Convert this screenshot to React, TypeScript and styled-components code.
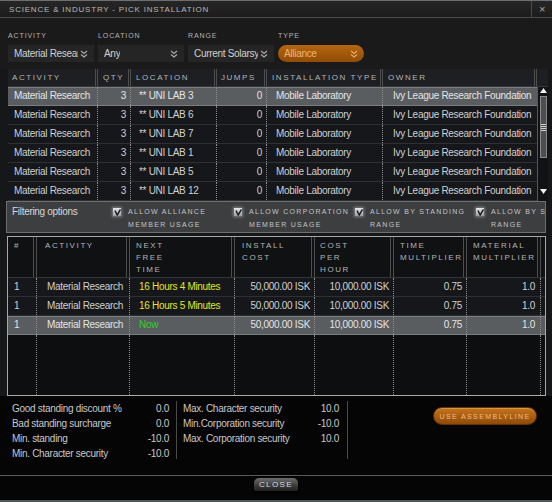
import React from "react"
import styled, { createGlobalStyle } from "styled-components"

const GlobalStyle = createGlobalStyle`
	html, body {
		margin: 0;
		padding: 0;
		background: #000;
	}
	body {
		font-family: "Liberation Sans", Arial, sans-serif;
	}
`

const Window = styled.div`
	width: 552px;
	height: 502px;
	box-sizing: border-box;
	border-top: 1px solid #6e6e6e;
	border-bottom: 2px solid #4a5858;
	background: #161718;
	color: #d0d0d0;
	font-size: 10px;
	letter-spacing: -0.3px;
	display: flex;
	flex-direction: column;
	overflow: hidden;
`

const TitleBar = styled.div`
	height: 16px;
	border-bottom: 1px solid #4a4a4a;
	background: linear-gradient(#262626, #1c1c1c);
	display: flex;
	align-items: center;
	justify-content: space-between;
	padding-left: 9px;
`

const Caps = styled.span<{ $size?: number; $ls?: number; $color?: string }>`
	font-size: ${(p) => p.$size ?? 8}px;
	letter-spacing: ${(p) => p.$ls ?? 1.5}px;
	color: ${(p) => p.$color ?? "#b4b4b4"};
	text-transform: uppercase;
	white-space: nowrap;
`

const CloseX = styled.div`
	width: 20px;
	height: 16px;
	border-left: 1px solid #4a4a4a;
	display: flex;
	align-items: center;
	justify-content: center;
	color: #a8a8a8;
	font-size: 11px;
`

const FilterBar = styled.div`
	display: grid;
	grid-template-columns: repeat(4, 86px);
	column-gap: 4px;
	padding: 13px 0 7px 8px;
	background: #1a1a1b;
`

const FilterField = styled.div`
	display: flex;
	flex-direction: column;
	gap: 4px;
	line-height: 10px;
`

const Select = styled.div<{ $accent?: boolean }>`
	height: 17px;
	box-sizing: border-box;
	display: flex;
	align-items: center;
	justify-content: space-between;
	gap: 2px;
	padding: 0 6px 0 6px;
	white-space: nowrap;
	overflow: hidden;
	font-size: 10px;
	color: ${(p) => (p.$accent ? "#f2b46a" : "#d0d0d0")};
	background: ${(p) =>
		p.$accent ? "linear-gradient(#b56610, #8f4c08)" : "#252526"};
	border-radius: ${(p) => (p.$accent ? "9px" : "0")};
	span {
		overflow: hidden;
	}
`

const Chevrons = ({ color }: { color: string }) => (
	<svg width='8' height='8' viewBox='0 0 8 8' style={{ flexShrink: 0 }}>
		<path d='M1 1 L4 3.5 L7 1 M1 4.5 L4 7 L7 4.5' stroke={color} strokeWidth='1.2' fill='none' />
	</svg>
)

const Table = styled.div`
	margin: 0 4px 0 8px;
	display: flex;
	flex-direction: column;
`

const HeadRow = styled.div<{ $cols: string; $h: number }>`
	display: grid;
	grid-template-columns: ${(p) => p.$cols};
	height: ${(p) => p.$h}px;
	border-bottom: 1px solid #333538;
	background: ${(p) => (p.$h > 20 ? "#0f1113" : "#1d1f22")};
`

const HeadCell = styled.div<{ $right?: boolean; $pad?: number; $double?: number }>`
	border-right: ${(p) => p.$double ?? 3}px double #4e4e4e;
	padding: ${(p) => (p.$right ? `0 8px 0 0` : `0 0 0 ${p.$pad ?? 5}px`)};
	text-align: ${(p) => (p.$right ? "right" : "left")};
	font-size: 8px;
	letter-spacing: 1.6px;
	color: #b4b4b4;
	text-transform: uppercase;
	white-space: nowrap;
	overflow: hidden;
	line-height: 17px;
	&:last-child {
		border-right: none;
	}
`

const TallHeadCell = styled(HeadCell)`
	line-height: 12px;
	padding-top: 3px;
`

const Body = styled.div`
	display: flex;
`

const Rows = styled.div`
	display: flex;
	flex-direction: column;
	width: 529px;
`

const Row = styled.div<{ $cols: string; $sel?: boolean }>`
	display: grid;
	grid-template-columns: ${(p) => p.$cols};
	height: 18px;
	border-bottom: 1px solid ${(p) => (p.$sel ? "#7a7c7e" : "#2e3033")};
	background: ${(p) => (p.$sel ? "#5a5d60" : "#15171a")};
	box-shadow: ${(p) => (p.$sel ? "inset 0 1px 0 #7a7c7e" : "none")};
	color: ${(p) => (p.$sel ? "#e4e4e4" : "#d0d0d0")};
`

const Cell = styled.div<{ $right?: boolean; $pad?: number; $color?: string }>`
	border-right: 1px dotted #8c8c8c;
	padding: ${(p) => (p.$right ? `0 ${p.$pad ?? 4}px 0 0` : `0 0 0 ${p.$pad ?? 8}px`)};
	text-align: ${(p) => (p.$right ? "right" : "left")};
	line-height: 18px;
	white-space: nowrap;
	overflow: hidden;
	color: ${(p) => p.$color ?? "inherit"};
	&:last-child {
		border-right: none;
	}
`

const ScrollBar = styled.div`
	width: 11px;
	border-left: 1px solid #55585b;
	background: #101214;
	display: flex;
	flex-direction: column;
	align-items: center;
	padding: 1px 0;
	box-sizing: border-box;
`

const Thumb = styled.div`
	width: 7px;
	height: 62px;
	margin-top: 3px;
	box-sizing: border-box;
	border: 1px solid #8a8a8a;
	background: #4c4e50;
	display: flex;
	flex-direction: column;
	align-items: center;
	justify-content: center;
	gap: 1px;
	i {
		display: block;
		width: 5px;
		height: 1px;
		background: #cfcfcf;
	}
`

const ScrollSpacer = styled.div`
	flex: 1;
`

const FilterPanel = styled.div`
	margin: 0 6px 0 6px;
	height: 32px;
	box-sizing: border-box;
	border: 1px solid #6e6e6e;
	background: #3c3e40;
	display: grid;
	grid-template-columns: 101px repeat(4, 121px);
	padding: 3px 0 0 5px;
	overflow: hidden;
`

const PanelTitle = styled.div`
	font-size: 10px;
	color: #d8d8d8;
	line-height: 13px;
`

const Check = styled.div`
	display: flex;
	align-items: flex-start;
	gap: 7px;
	white-space: nowrap;
`

const Box = styled.span`
	width: 8px;
	height: 8px;
	margin-top: 3px;
	flex-shrink: 0;
	background: linear-gradient(#e8e8e8, #9c9c9c);
	box-shadow: 0 0 3px 1px rgba(255, 255, 255, 0.35);
	display: flex;
	align-items: center;
	justify-content: center;
`

const CheckLabel = styled.div`
	font-size: 7px;
	letter-spacing: 1.3px;
	line-height: 13px;
	color: #c4c4c4;
`

const Table2 = styled.div`
	margin: 3px 6px 0 7px;
	height: 160px;
	box-sizing: border-box;
	border: 1px solid #a8a8a8;
	display: flex;
	flex-direction: column;
	background: #0c0e10;
`

const Filler = styled.div<{ $cols: string }>`
	flex: 1;
	display: grid;
	grid-template-columns: ${(p) => p.$cols};
	div {
		border-right: 1px dotted #8c8c8c;
	}
	div:last-child {
		border-right: none;
	}
`

const Stats = styled.div`
	height: 79px;
	box-sizing: border-box;
	background: #050505;
	display: flex;
	align-items: flex-start;
	padding: 5px 15px 0 12px;
`

const StatBlock = styled.div<{ $w: number }>`
	width: ${(p) => p.$w}px;
	display: grid;
	grid-template-columns: 1fr auto;
	line-height: 15px;
	font-size: 10px;
	color: #c8c8c8;
	white-space: nowrap;
	span:nth-child(2n) {
		text-align: right;
	}
`

const VDivider = styled.div<{ $ml: number }>`
	width: 1px;
	height: 58px;
	background: #4a4a4a;
	margin: 0 6px 0 ${(p) => p.$ml}px;
`

const AssemblyButton = styled.button`
	margin: 6px 0 0 auto;
	width: 104px;
	height: 18px;
	border-radius: 9px;
	border: 1px solid #5c3206;
	background: linear-gradient(#c6741c, #8e4a08);
	box-shadow: inset 0 1px 0 rgba(255, 210, 150, 0.35);
	font-family: inherit;
	font-size: 7px;
	letter-spacing: 1.4px;
	white-space: nowrap;
	color: #f3bd85;
	padding: 0;
`

const Footer = styled.div`
	flex: 1;
	border-top: 1px solid #5a5a5a;
	background: #050505;
	display: flex;
	justify-content: center;
	padding-top: 2px;
`

const CloseButton = styled.button`
	width: 44px;
	height: 13px;
	padding: 0;
	border: none;
	border-radius: 5px 5px 2px 2px;
	background: linear-gradient(#6e6e6e, #3a3a3a 60%, #222);
	box-shadow: 0 2px 3px rgba(0, 0, 0, 0.8);
	font-family: inherit;
	font-size: 8px;
	letter-spacing: 1.4px;
	color: #d8d8d8;
	line-height: 13px;
`

const t1Cols = "90px 33px 86px 50px 116px 154px"
const t2Cols = "29px 93px 105px 80px 79px 73px 74px 4px"

const labs = ["3", "6", "7", "1", "5", "12"]

const jobs = [
	{ time: "16 Hours 4 Minutes", color: "#e4e42a" },
	{ time: "16 Hours 5 Minutes", color: "#e4e42a" },
	{ time: "Now", color: "#2fd02f" }
]

const options = [
	["ALLOW ALLIANCE", "MEMBER USAGE"],
	["ALLOW CORPORATION", "MEMBER USAGE"],
	["ALLOW BY STANDING", "RANGE"],
	["ALLOW BY SECURITY", "RANGE"]
]

export default function App() {
	return (
		<>
			<GlobalStyle />
			<Window>
				<TitleBar>
					<Caps $ls={0.8} $color='#b8b8b8'>
						Science &amp; Industry - Pick Installation
					</Caps>
					<CloseX>×</CloseX>
				</TitleBar>

				<FilterBar>
					<FilterField>
						<Caps $size={7} $ls={0.9}>Activity</Caps>
						<Select>
							<span>Material Research</span>
							<Chevrons color='#a8a8a8' />
						</Select>
					</FilterField>
					<FilterField>
						<Caps $size={7} $ls={0.9}>Location</Caps>
						<Select>
							<span>Any</span>
							<Chevrons color='#a8a8a8' />
						</Select>
					</FilterField>
					<FilterField>
						<Caps $size={7} $ls={0.9}>Range</Caps>
						<Select>
							<span>Current Solarsystem</span>
							<Chevrons color='#a8a8a8' />
						</Select>
					</FilterField>
					<FilterField>
						<Caps $size={7} $ls={0.9}>Type</Caps>
						<Select $accent>
							<span>Alliance</span>
							<Chevrons color='#e8a860' />
						</Select>
					</FilterField>
				</FilterBar>

				<Table>
					<HeadRow $cols={`${t1Cols} 11px`} $h={17}>
						<HeadCell $pad={4}>Activity</HeadCell>
						<HeadCell>Qty</HeadCell>
						<HeadCell>Location</HeadCell>
						<HeadCell $right>Jumps</HeadCell>
						<HeadCell>Installation Type</HeadCell>
						<HeadCell>Owner</HeadCell>
						<HeadCell />
					</HeadRow>
					<Body>
						<Rows>
							{labs.map((n, i) => (
								<Row key={n} $cols={t1Cols} $sel={i === 0}>
									<Cell $pad={6}>Material Research</Cell>
									<Cell $right>3</Cell>
									<Cell>** UNI LAB {n}</Cell>
									<Cell $right>0</Cell>
									<Cell $pad={9}>Mobile Laboratory</Cell>
									<Cell $pad={10}>Ivy League Research Foundation</Cell>
								</Row>
							))}
						</Rows>
						<ScrollBar>
							<svg width='7' height='5' viewBox='0 0 7 5'>
								<polygon points='3.5,0 7,5 0,5' fill='#f0f0f0' />
							</svg>
							<Thumb>
								<i />
								<i />
								<i />
								<i />
							</Thumb>
							<ScrollSpacer />
							<svg width='7' height='5' viewBox='0 0 7 5' style={{ marginBottom: 6 }}>
								<polygon points='0,0 7,0 3.5,5' fill='#f0f0f0' />
							</svg>
						</ScrollBar>
					</Body>
				</Table>

				<FilterPanel>
					<PanelTitle>Filtering options</PanelTitle>
					{options.map(([a, b]) => (
						<Check key={a}>
							<Box>
								<svg width='7' height='7' viewBox='0 0 7 7'>
									<path d='M1 1.5 L3.2 6 L6.5 0.5' stroke='#1c1e2a' strokeWidth='1.5' fill='none' />
								</svg>
							</Box>
							<CheckLabel>
								{a}
								<br />
								{b}
							</CheckLabel>
						</Check>
					))}
				</FilterPanel>

				<Table2>
					<HeadRow $cols={t2Cols} $h={40}>
						<TallHeadCell $double={4} $pad={6}>#</TallHeadCell>
						<TallHeadCell $double={4} $pad={8}>Activity</TallHeadCell>
						<TallHeadCell $double={4} $pad={6}>
							Next
							<br />
							Free
							<br />
							Time
						</TallHeadCell>
						<TallHeadCell $double={4} $pad={7}>
							Install
							<br />
							Cost
						</TallHeadCell>
						<TallHeadCell $double={4} $pad={5}>
							Cost
							<br />
							Per
							<br />
							Hour
						</TallHeadCell>
						<TallHeadCell $double={4} $pad={6}>
							Time
							<br />
							Multiplier
						</TallHeadCell>
						<TallHeadCell $double={4} $pad={6}>
							Material
							<br />
							Multiplier
						</TallHeadCell>
						<TallHeadCell />
					</HeadRow>
					{jobs.map((j, i) => (
						<Row key={j.time} $cols={t2Cols} $sel={i === 2}>
							<Cell $pad={6}>1</Cell>
							<Cell $pad={10}>Material Research</Cell>
							<Cell $pad={9} $color={j.color}>
								{j.time}
							</Cell>
							<Cell $right>50,000.00 ISK</Cell>
							<Cell $right>10,000.00 ISK</Cell>
							<Cell $right>0.75</Cell>
							<Cell $right $pad={5}>
								1.0
							</Cell>
							<Cell />
						</Row>
					))}
					<Filler $cols={t2Cols}>
						<div />
						<div />
						<div />
						<div />
						<div />
						<div />
						<div />
						<div />
					</Filler>
				</Table2>

				<Stats>
					<StatBlock $w={157}>
						<span>Good standing discount %</span>
						<span>0.0</span>
						<span>Bad standing surcharge</span>
						<span>0.0</span>
						<span>Min. standing</span>
						<span>-10.0</span>
						<span>Min. Character security</span>
						<span>-10.0</span>
					</StatBlock>
					<VDivider $ml={7} />
					<StatBlock $w={156}>
						<span>Max. Character security</span>
						<span>10.0</span>
						<span>Min.Corporation security</span>
						<span>-10.0</span>
						<span>Max. Corporation security</span>
						<span>10.0</span>
					</StatBlock>
					<VDivider $ml={8} />
					<AssemblyButton>USE ASSEMBLYLINE</AssemblyButton>
				</Stats>

				<Footer>
					<CloseButton>CLOSE</CloseButton>
				</Footer>
			</Window>
		</>
	)
}
